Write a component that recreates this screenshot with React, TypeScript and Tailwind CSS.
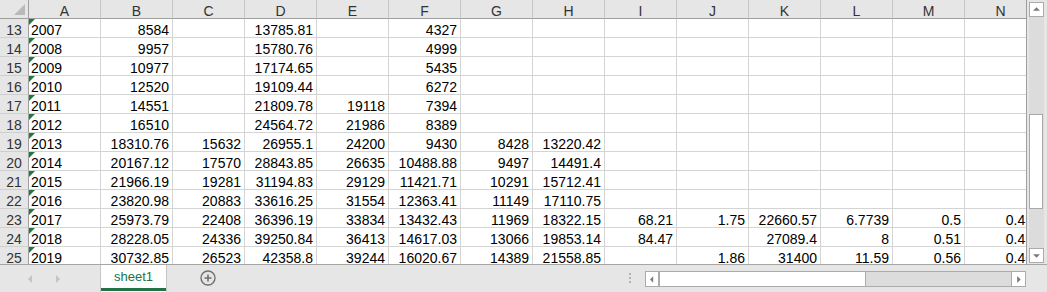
const cols = ["A", "B", "C", "D", "E", "F", "G", "H", "I", "J", "K", "L", "M", "N"];

// row number + values for A..N
const rows: [number, string[]][] = [
  [13, ["2007", "8584", "", "13785.81", "", "4327", "", "", "", "", "", "", "", ""]],
  [14, ["2008", "9957", "", "15780.76", "", "4999", "", "", "", "", "", "", "", ""]],
  [15, ["2009", "10977", "", "17174.65", "", "5435", "", "", "", "", "", "", "", ""]],
  [16, ["2010", "12520", "", "19109.44", "", "6272", "", "", "", "", "", "", "", ""]],
  [17, ["2011", "14551", "", "21809.78", "19118", "7394", "", "", "", "", "", "", "", ""]],
  [18, ["2012", "16510", "", "24564.72", "21986", "8389", "", "", "", "", "", "", "", ""]],
  [19, ["2013", "18310.76", "15632", "26955.1", "24200", "9430", "8428", "13220.42", "", "", "", "", "", ""]],
  [20, ["2014", "20167.12", "17570", "28843.85", "26635", "10488.88", "9497", "14491.4", "", "", "", "", "", ""]],
  [21, ["2015", "21966.19", "19281", "31194.83", "29129", "11421.71", "10291", "15712.41", "", "", "", "", "", ""]],
  [22, ["2016", "23820.98", "20883", "33616.25", "31554", "12363.41", "11149", "17110.75", "", "", "", "", "", ""]],
  [23, ["2017", "25973.79", "22408", "36396.19", "33834", "13432.43", "11969", "18322.15", "68.21", "1.75", "22660.57", "6.7739", "0.5", "0.45"]],
  [24, ["2018", "28228.05", "24336", "39250.84", "36413", "14617.03", "13066", "19853.14", "84.47", "", "27089.4", "8", "0.51", "0.45"]],
  [25, ["2019", "30732.85", "26523", "42358.8", "39244", "16020.67", "14389", "21558.85", "", "1.86", "31400", "11.59", "0.56", "0.46"]],
];

function ArrowBtn({ dir }: { dir: "up" | "down" | "left" | "right" }) {
  const pts = {
    up: "3.5,9 11.5,9 7.5,5",
    down: "3.5,6 11.5,6 7.5,10",
    left: "9,3.5 9,11.5 5,7.5",
    right: "6,3.5 6,11.5 10,7.5",
  }[dir];
  return (
    <svg width="15" height="15" viewBox="0 0 15 15">
      <polygon points={pts} fill="#7a7a7a" />
    </svg>
  );
}

export default function App() {
  return (
    <div className="w-[1047px] h-[292px] overflow-hidden bg-[#e6e6e6] flex flex-col text-[14px] text-black [font-family:'Liberation_Sans',Arial,sans-serif]">
      <div className="flex h-[264px]">
        {/* sheet grid */}
        <div className="w-[1026px] h-[264px] overflow-hidden bg-white">
          <div className="grid grid-cols-[29px_repeat(14,72px)] w-[1037px]">
            <div className="relative h-[19px] bg-[#e6e6e6] border-r border-b border-[#9e9e9e]">
              <svg className="absolute right-[3px] bottom-[3px]" width="11" height="11" viewBox="0 0 11 11">
                <polygon points="11,0 11,11 0,11" fill="#b9b9b9" />
              </svg>
            </div>
            {cols.map((c) => (
              <div
                key={c}
                className="h-[19px] bg-[#e6e6e6] border-r border-r-[#c6c6c6] border-b border-b-[#9e9e9e] pt-[4px] leading-[14px] text-center text-[#333]"
              >
                {c}
              </div>
            ))}
            {rows.map(([n, vals]) => (
              <div key={n} className="contents">
                <div className="h-[19px] bg-[#e6e6e6] border-r border-r-[#9e9e9e] border-b border-b-[#cfcfcf] pt-[4px] leading-[14px] text-center text-[#333]">
                  {n}
                </div>
                {vals.map((v, i) => (
                  <div
                    key={i}
                    className={`relative h-[19px] border-r border-b border-[#d4d4d4] pt-[4px] leading-[14px] whitespace-nowrap overflow-hidden ${
                      i === 0 ? "text-left pl-[2px]" : "text-right pr-[3px]"
                    }`}
                  >
                    {i === 0 && (
                      <svg className="absolute left-0 top-0" width="6" height="6" viewBox="0 0 6 6">
                        <polygon points="0,0 6,0 0,6" fill="#1f7a3e" />
                      </svg>
                    )}
                    {v}
                  </div>
                ))}
              </div>
            ))}
          </div>
        </div>

        {/* vertical scrollbar */}
        <div className="w-[21px] h-[264px] border-l border-[#9e9e9e] flex flex-col pl-[2px] pt-[2px] pb-[1px]">
          <div className="w-[15px] h-[15px] bg-white border border-[#ababab] flex items-center justify-center">
            <ArrowBtn dir="up" />
          </div>
          <div className="w-[15px] flex-1 bg-[#dcdcdc] pt-[97px]">
            <div className="w-[14px] h-[95px] bg-white border border-[#a8a8a8]" />
          </div>
          <div className="w-[15px] h-[15px] bg-white border border-[#ababab] flex items-center justify-center">
            <ArrowBtn dir="down" />
          </div>
        </div>
      </div>

      {/* sheet tabs bar */}
      <div className="flex h-[28px] border-t border-[#a6a6a6]">
        <div className="w-[100px] flex items-center pl-[26px] gap-[20px]">
          <svg width="8" height="10" viewBox="0 0 8 10">
            <polygon points="6,1 6,9 2,5" fill="#c4c4c4" />
          </svg>
          <svg width="8" height="10" viewBox="0 0 8 10">
            <polygon points="2,1 2,9 6,5" fill="#c4c4c4" />
          </svg>
        </div>
        <div className="w-[67px] bg-white border-x border-[#c6c6c6] flex flex-col">
          <div className="flex-1 flex items-center justify-center pt-[1px] text-[13px] text-[#217346]">sheet1</div>
          <div className="h-[3px] bg-[#217346] mb-[1px]" />
        </div>
        <div className="ml-[33px] flex items-center pb-[2px]">
          <svg width="16" height="16" viewBox="0 0 16 16">
            <circle cx="8" cy="8" r="7" fill="none" stroke="#707070" strokeWidth="1.4" />
            <path d="M8 4.5v7M4.5 8h7" stroke="#707070" strokeWidth="1.6" />
          </svg>
        </div>
        <div className="flex-1" />
        <div className="flex flex-col justify-center gap-[2px] pb-[2px]">
          <div className="w-[2px] h-[2px] bg-[#b3b3b3]" />
          <div className="w-[2px] h-[2px] bg-[#b3b3b3]" />
          <div className="w-[2px] h-[2px] bg-[#b3b3b3]" />
        </div>
        <div className="ml-[14px] w-[381px] pt-[6px]">
          <div className="h-[16px] flex border border-[#ababab] bg-[#dcdcdc]">
            <div className="w-[14px] bg-white border-r-2 border-[#ababab] flex items-center justify-center">
              <ArrowBtn dir="left" />
            </div>
            <div className="w-[206px] bg-white border-r border-[#ababab]" />
            <div className="flex-1" />
            <div className="w-[14px] bg-white border-l border-[#ababab] flex items-center justify-center">
              <ArrowBtn dir="right" />
            </div>
          </div>
        </div>
        <div className="w-[21px]" />
      </div>
    </div>
  );
}
